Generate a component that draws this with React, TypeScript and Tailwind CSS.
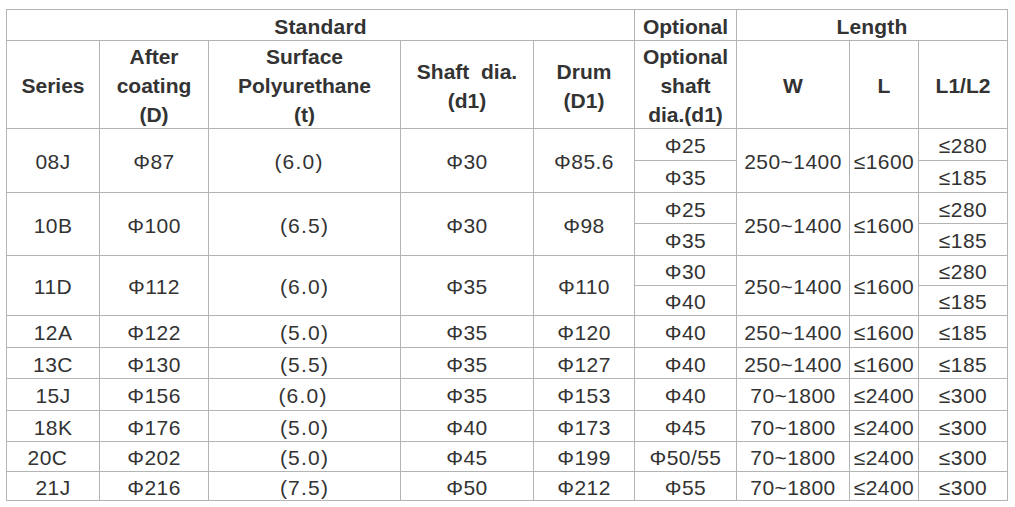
import React from "react";

const C = ({ children, cls = "" }: { children: React.ReactNode; cls?: string }) => (
  <div className={`bg-white flex items-center justify-center text-center pt-[2px] ${cls}`}>{children}</div>
);
const B = ({ children, cls = "" }: { children: React.ReactNode; cls?: string }) => (
  <C cls={`tracking-[0.45px] ${cls}`}>{children}</C>
);

type Multi = {
  s: string; d: string; t: string; d1: string; D1: string;
  o: [string, string]; w: string; l: string; l1: [string, string];
  sCls?: string; tCls?: string;
};
type Single = {
  s: string; d: string; t: string; d1: string; D1: string;
  o: string; w: string; l: string; l1: string; sCls?: string; tCls?: string;
};

const multi: Multi[] = [
  { s: "08J", d: "Φ87", t: "(6.0)", d1: "Φ30", D1: "Φ85.6", o: ["Φ25", "Φ35"], w: "250~1400", l: "≤1600", l1: ["≤280", "≤185"], tCls: "pr-[11px]" },
  { s: "10B", d: "Φ100", t: "(6.5)", d1: "Φ30", D1: "Φ98", o: ["Φ25", "Φ35"], w: "250~1400", l: "≤1600", l1: ["≤280", "≤185"] },
  { s: "11D", d: "Φ112", t: "(6.0)", d1: "Φ35", D1: "Φ110", o: ["Φ30", "Φ40"], w: "250~1400", l: "≤1600", l1: ["≤280", "≤185"] },
];

const single: Single[] = [
  { s: "12A", d: "Φ122", t: "(5.0)", d1: "Φ35", D1: "Φ120", o: "Φ40", w: "250~1400", l: "≤1600", l1: "≤185" },
  { s: "13C", d: "Φ130", t: "(5.5)", d1: "Φ35", D1: "Φ127", o: "Φ40", w: "250~1400", l: "≤1600", l1: "≤185" },
  { s: "15J", d: "Φ156", t: "(6.0)", d1: "Φ35", D1: "Φ153", o: "Φ40", w: "70~1800", l: "≤2400", l1: "≤300", tCls: "pr-[3px]" },
  { s: "18K", d: "Φ176", t: "(5.0)", d1: "Φ40", D1: "Φ173", o: "Φ45", w: "70~1800", l: "≤2400", l1: "≤300" },
  { s: "20C", d: "Φ202", t: "(5.0)", d1: "Φ45", D1: "Φ199", o: "Φ50/55", w: "70~1800", l: "≤2400", l1: "≤300", sCls: "pr-[11px]" },
  { s: "21J", d: "Φ216", t: "(7.5)", d1: "Φ50", D1: "Φ212", o: "Φ55", w: "70~1800", l: "≤2400", l1: "≤300" },
];

export default function App() {
  return (
    <div className="w-[1015px] h-[507px] bg-white pt-[9px] pl-[6px] font-['Liberation_Sans',Arial,sans-serif] text-[21px] leading-[29px] text-[#333]">
      <div className="grid w-fit gap-px p-px bg-[#b4b4b4] grid-cols-[92px_108px_191px_132px_100px_101px_112px_68px_88px] grid-rows-[30px_87px_31px_31px_30px_31px_29px_29px_31px_30px_31px_30px_29px_28px]">
        <C cls="col-span-5 font-bold pt-[3px] tracking-[0.2px]">Standard</C>
        <C cls="font-bold pt-[3px]">Optional</C>
        <C cls="col-span-3 font-bold pt-[3px] tracking-[0.2px]">Length</C>

        <C cls="font-bold">Series</C>
        <C cls="font-bold">After<br />coating<br />(D)</C>
        <C cls="font-bold">Surface<br />Polyurethane<br />(t)</C>
        <C cls="font-bold">{"Shaft\u00A0 dia."}<br />(d1)</C>
        <C cls="font-bold">Drum<br />(D1)</C>
        <C cls="font-bold">Optional<br />shaft<br />dia.(d1)</C>
        <C cls="font-bold">W</C>
        <C cls="font-bold">L</C>
        <C cls="font-bold">L1/L2</C>

        {multi.map((r) => (
          <React.Fragment key={r.s}>
            <B cls={`row-span-2 ${r.sCls ?? ""}`}>{r.s}</B>
            <B cls="row-span-2">{r.d}</B>
            <B cls={`row-span-2 tracking-[1.2px] ${r.tCls ?? ""}`}>{r.t}</B>
            <B cls="row-span-2">{r.d1}</B>
            <B cls="row-span-2">{r.D1}</B>
            <B>{r.o[0]}</B>
            <B cls="row-span-2">{r.w}</B>
            <B cls="row-span-2">{r.l}</B>
            <B>{r.l1[0]}</B>
            <B>{r.o[1]}</B>
            <B>{r.l1[1]}</B>
          </React.Fragment>
        ))}

        {single.map((r) => (
          <React.Fragment key={r.s}>
            <B cls={r.sCls}>{r.s}</B>
            <B>{r.d}</B>
            <B cls={`tracking-[1.2px] ${r.tCls ?? ""}`}>{r.t}</B>
            <B>{r.d1}</B>
            <B>{r.D1}</B>
            <B>{r.o}</B>
            <B>{r.w}</B>
            <B>{r.l}</B>
            <B>{r.l1}</B>
          </React.Fragment>
        ))}
      </div>
    </div>
  );
}
